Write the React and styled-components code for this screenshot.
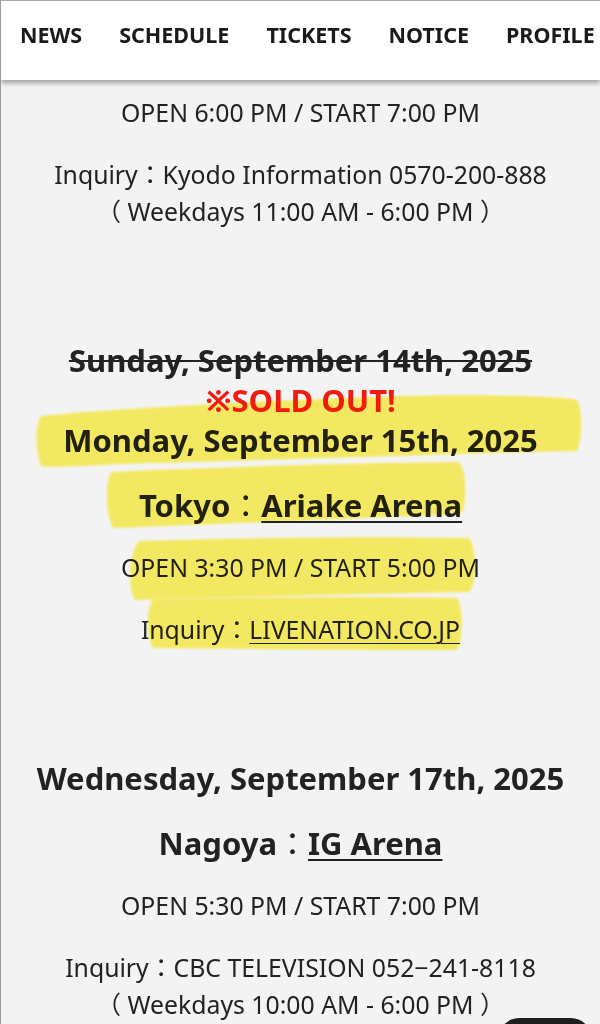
import React from "react";
import styled, { createGlobalStyle } from "styled-components";

const GlobalStyle = createGlobalStyle`
  html, body {
    margin: 0;
    padding: 0;
    background: #f3f3f3;
  }
  body {
    font-family: "Noto Sans", "Noto Sans CJK JP", sans-serif;
    color: #222;
    overflow: hidden;
  }
`;

const Page = styled.div`
  position: relative;
  width: 600px;
  height: 1024px;
  overflow: hidden;
  background: #f3f3f3;
  border-left: 1px solid #9a9a9a;
  box-sizing: border-box;
`;

const Header = styled.header`
  position: relative;
  z-index: 2;
  height: 80px;
  background: #fff;
  border-top: 1px solid #aaa;
  box-sizing: border-box;
  box-shadow: 0 3px 5px rgba(0, 0, 0, 0.35);
`;

const Nav = styled.nav`
  display: flex;
  gap: 37px;
  padding: 21px 0 0 19px;
  white-space: nowrap;
`;

const NavItem = styled.a`
  font-size: 21.5px;
  font-weight: 700;
  line-height: 26px;
  color: #1a1a1a;
  text-decoration: none;
`;

const Content = styled.main`
  display: flex;
  flex-direction: column;
  gap: 110px;
  padding-top: 14px;
  text-align: center;
`;

const Section = styled.section`
  display: flex;
  flex-direction: column;
  gap: 24px;
`;

const DateBlock = styled.div`
  display: flex;
  flex-direction: column;
`;

const Heading = styled.h3`
  margin: 0;
  font-size: 31px;
  font-weight: 700;
  line-height: 40px;
  white-space: nowrap;
  color: ${(p) => (p.$red ? "#f01c12" : "#222")};
  text-decoration: ${(p) => (p.$struck ? "line-through" : "none")};
  text-decoration-thickness: 2px;
`;

const Line = styled.p`
  margin: 0;
  font-size: 24.8px;
  line-height: 37px;
  white-space: nowrap;
  color: #222;
`;

const Link = styled.a`
  color: inherit;
  text-decoration: underline;
  text-underline-offset: 4px;
  text-decoration-thickness: ${(p) => (p.$bold ? "2px" : "1px")};
`;

const Colon = styled.span`
  font-family: "Noto Sans CJK JP", sans-serif;
  font-weight: 400;
`;

const Marker = styled.svg`
  position: absolute;
  top: 0;
  left: 0;
  z-index: 1;
  pointer-events: none;
  mix-blend-mode: multiply;
`;

const TopButton = styled.div`
  position: absolute;
  left: 498px;
  top: 1018px;
  width: 92px;
  height: 40px;
  border-radius: 20px;
  background: #1e1e1e;
  z-index: 3;
`;

const strokes = [
  "M40 416 C120 408 260 401 400 396 C480 394 560 396 576 400 C582 410 581 440 576 451 C480 453 300 459 120 464 C80 466 50 468 40 466 C34 450 34 426 40 416 Z",
  "M110 472 C200 468 330 463 458 462 C466 470 466 505 460 514 C360 518 220 524 112 528 C104 512 104 484 110 472 Z",
  "M138 541 C240 538 360 536 468 538 C476 548 476 584 468 592 C360 594 240 597 134 600 C126 588 128 552 138 541 Z",
  "M152 599 C250 597 360 596 456 598 C463 608 462 640 456 650 C360 650 250 649 152 648 C145 636 145 610 152 599 Z",
];

const App = () => {
  return (
    <Page>
      <GlobalStyle />
      <Header>
        <Nav>
          <NavItem href="#">NEWS</NavItem>
          <NavItem href="#">SCHEDULE</NavItem>
          <NavItem href="#">TICKETS</NavItem>
          <NavItem href="#">NOTICE</NavItem>
          <NavItem href="#">PROFILE</NavItem>
        </Nav>
      </Header>

      <Content>
        <Section>
          <Line>OPEN 6:00 PM / START 7:00 PM</Line>
          <Line>
            Inquiry<Colon>：</Colon>Kyodo Information 0570-200-888
            <br />
            （ Weekdays 11:00 AM - 6:00 PM ）
          </Line>
        </Section>

        <Section>
          <DateBlock>
            <Heading $struck>Sunday, September 14th, 2025</Heading>
            <Heading $red>※SOLD OUT!</Heading>
            <Heading>Monday, September 15th, 2025</Heading>
          </DateBlock>
          <Heading>
            Tokyo<Colon>：</Colon>
            <Link href="#" $bold>Ariake Arena</Link>
          </Heading>
          <Line>OPEN 3:30 PM / START 5:00 PM</Line>
          <Line>
            Inquiry<Colon>：</Colon>
            <Link href="#">LIVENATION.CO.JP</Link>
          </Line>
        </Section>

        <Section>
          <Heading>Wednesday, September 17th, 2025</Heading>
          <Heading>
            Nagoya<Colon>：</Colon>
            <Link href="#" $bold>IG Arena</Link>
          </Heading>
          <Line>OPEN 5:30 PM / START 7:00 PM</Line>
          <Line>
            Inquiry<Colon>：</Colon>CBC TELEVISION 052−241-8118
            <br />
            （ Weekdays 10:00 AM - 6:00 PM ）
          </Line>
        </Section>
      </Content>

      <Marker width="600" height="1024" viewBox="0 0 600 1024">
        <defs>
          <filter id="soft" x="-5%" y="-20%" width="110%" height="140%">
            <feGaussianBlur stdDeviation="1.2" />
          </filter>
        </defs>
        {strokes.map((d, i) => (
          <path key={i} d={d} fill="#fff45a" opacity="0.92" filter="url(#soft)" />
        ))}
      </Marker>

      <TopButton />
    </Page>
  );
};

export default App;
